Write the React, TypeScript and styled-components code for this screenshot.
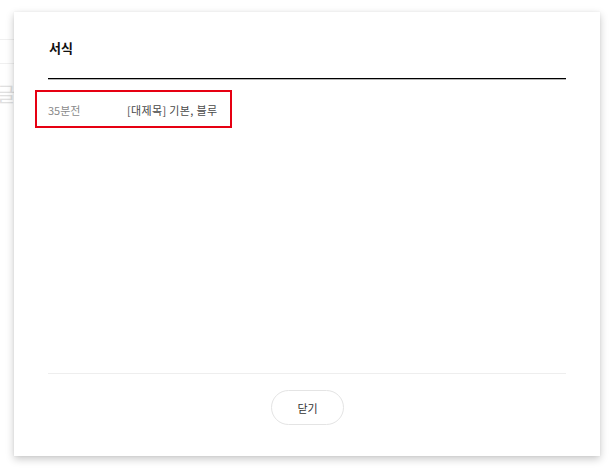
import styled, { createGlobalStyle } from 'styled-components';

const GlobalStyle = createGlobalStyle`
  html, body {
    margin: 0;
    padding: 0;
    background: #fff;
    font-family: "Noto Sans CJK KR", "Noto Sans", sans-serif;
  }
  * { box-sizing: border-box; }
`;

const Page = styled.div`
  position: relative;
  width: 613px;
  height: 472px;
  overflow: hidden;
  background: #fff;
`;

const BackRule = styled.div<{ $top: number }>`
  height: 1px;
  width: 40px;
  background: #f0f0f0;
  margin-top: ${({ $top }) => $top}px;
`;

const BackLabel = styled.div`
  margin: 16px 0 0 -3px;
  font-size: 20px;
  line-height: 28px;
  color: #e0e0e0;
`;

const Modal = styled.div`
  position: absolute;
  top: 12px;
  left: 14px;
  width: 586px;
  height: 444px;
  background: #fff;
  box-shadow: 0 3px 8px rgba(0, 0, 0, 0.22), 0 0 2px rgba(0, 0, 0, 0.06);
  padding: 0 34px;
  display: flex;
  flex-direction: column;
`;

const Header = styled.div`
  padding: 26px 1px 20px;
  border-bottom: 1px solid #000;
  box-shadow: 0 1px 0 #b5b5b5;
`;

const Title = styled.h2`
  margin: 0;
  font-size: 13px;
  line-height: 20px;
  font-weight: 700;
  color: #111;
`;

const List = styled.div`
  flex: 1;
  padding-top: 11px;
`;

const Item = styled.div<{ $selected?: boolean }>`
  display: inline-flex;
  align-items: center;
  height: 38px;
  margin-left: -13px;
  padding: 2px 13px 0 11px;
  border: 2px solid ${({ $selected }) => ($selected ? '#e60012' : 'transparent')};
  font-size: 11px;
`;

const When = styled.span`
  width: 79px;
  color: #8a8a8a;
`;

const Name = styled.span`
  color: #4a4a4a;
  letter-spacing: 0.35px;
`;

const Footer = styled.div`
  border-top: 1px solid #eeeeee;
  padding: 16px 0 31px;
  display: flex;
  justify-content: center;
`;

const CloseButton = styled.button`
  width: 73px;
  height: 35px;
  border: 1px solid #e4e4e4;
  border-radius: 18px;
  background: #fff;
  font-family: inherit;
  font-size: 11px;
  color: #333;
  cursor: pointer;
  margin-left: 1px;
`;

export default function App() {
  return (
    <>
      <GlobalStyle />
      <Page>
        <BackRule $top={39} />
        <BackRule $top={23} />
        <BackLabel>글꼴</BackLabel>
        <Modal>
          <Header>
            <Title>서식</Title>
          </Header>
          <List>
            <Item $selected>
              <When>35분전</When>
              <Name>[대제목] 기본, 블루</Name>
            </Item>
          </List>
          <Footer>
            <CloseButton>닫기</CloseButton>
          </Footer>
        </Modal>
      </Page>
    </>
  );
}
